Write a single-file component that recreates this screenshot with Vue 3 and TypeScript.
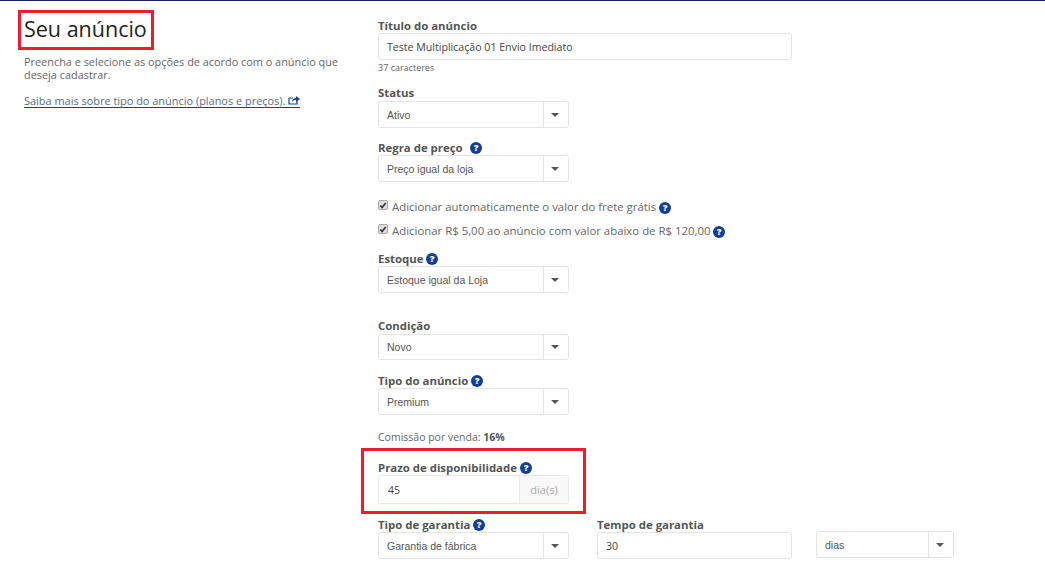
<script setup lang="ts">
const helpPath = 'M7 0a7 7 0 1 0 0 14A7 7 0 0 0 7 0z'
</script>

<template>
  <div class="page">
    <aside class="side">
      <h1 class="title">Seu anúncio</h1>
      <p class="intro">Preencha e selecione as opções de acordo com o anúncio que deseja cadastrar.</p>
      <a class="more">Saiba mais sobre tipo do anúncio (planos e preços).
        <svg class="ext" width="12" height="10" viewBox="0 0 12 10"><path d="M1 3h4M1 3v6h8V6" fill="none" stroke="#15418c" stroke-width="1.2"/><path d="M4 7c0-3 2-4 4-4V1l4 3-4 3V5C6 5 5 5.500 4 7z" fill="#15418c"/></svg>
      </a>
    </aside>
    <main class="form">
      <label class="lab l-titulo">Título do anúncio</label>
      <div class="input wide">Teste Multiplicação 01 Envio Imediato</div>
      <div class="hint">37 caracteres</div>

      <label class="lab l-status">Status</label>
      <div class="select s-status"><span>Ativo</span><i class="arrow"></i></div>

      <label class="lab l-regra">Regra de preço <svg class="q q-far" viewBox="0 0 14 14"><path :d="helpPath" fill="#123f94"/><text x="7" y="11" text-anchor="middle" class="qt">?</text></svg></label>
      <div class="select"><span>Preço igual da loja</span><i class="arrow"></i></div>

      <div class="check c1"><span class="box"><svg viewBox="0 0 9 9" width="9" height="9"><path d="M1.500 4.500l2 2.200 4-5" fill="none" stroke="#333" stroke-width="1.800"/></svg></span>Adicionar automaticamente o valor do frete grátis<svg class="q" viewBox="0 0 14 14"><path :d="helpPath" fill="#123f94"/><text x="7" y="11" text-anchor="middle" class="qt">?</text></svg></div>
      <div class="check c2"><span class="box"><svg viewBox="0 0 9 9" width="9" height="9"><path d="M1.500 4.500l2 2.200 4-5" fill="none" stroke="#333" stroke-width="1.800"/></svg></span>Adicionar R$ 5,00 ao anúncio com valor abaixo de R$ 120,00<svg class="q" viewBox="0 0 14 14"><path :d="helpPath" fill="#123f94"/><text x="7" y="11" text-anchor="middle" class="qt">?</text></svg></div>

      <label class="lab l-estoque">Estoque <svg class="q" viewBox="0 0 14 14"><path :d="helpPath" fill="#123f94"/><text x="7" y="11" text-anchor="middle" class="qt">?</text></svg></label>
      <div class="select"><span>Estoque igual da Loja</span><i class="arrow"></i></div>

      <label class="lab l-condicao">Condição</label>
      <div class="select s-cond"><span>Novo</span><i class="arrow"></i></div>

      <label class="lab l-tipo">Tipo do anúncio <svg class="q" viewBox="0 0 14 14"><path :d="helpPath" fill="#123f94"/><text x="7" y="11" text-anchor="middle" class="qt">?</text></svg></label>
      <div class="select"><span>Premium</span><i class="arrow"></i></div>

      <div class="commission">Comissão por venda: <b>16%</b></div>

      <section class="mark">
        <label class="lab">Prazo de disponibilidade <svg class="q" viewBox="0 0 14 14"><path :d="helpPath" fill="#123f94"/><text x="7" y="11" text-anchor="middle" class="qt">?</text></svg></label>
        <div class="group"><div class="gval">45</div><div class="addon">dia(s)</div></div>
      </section>

      <div class="row">
        <div class="col">
          <label class="lab">Tipo de garantia <svg class="q" viewBox="0 0 14 14"><path :d="helpPath" fill="#123f94"/><text x="7" y="11" text-anchor="middle" class="qt">?</text></svg></label>
          <div class="select"><span>Garantia de fábrica</span><i class="arrow"></i></div>
        </div>
        <div class="col col2">
          <label class="lab">Tempo de garantia</label>
          <div class="input time">30</div>
        </div>
        <div class="select small"><span>dias</span><i class="arrow"></i></div>
      </div>
    </main>
  </div>
</template>

<style>
html, body { margin: 0; background: #fff; overflow: hidden; }
</style>

<style scoped>
.page {
  width: 1045px; height: 573px; box-sizing: border-box; overflow: hidden;
  border-top: 1px solid #1f2460; display: flex;
  font-family: "Open Sans", sans-serif; color: #555; background: #fff;
}
.side { width: 378px; flex: none; padding-left: 24px; box-sizing: border-box; }
.title {
  display: table; margin: 9px 0 0 -6px; padding: 0 4px 3px 3px;
  height: 40px; line-height: 31px; box-sizing: border-box;
  border: 3px solid #ed1c2e; font-size: 21.500px; font-weight: 500; color: #222;
  white-space: nowrap;
}
.intro { margin: 5px 0 0; width: 325px; font-size: 10.900px; line-height: 13px; color: #666; }
.more {
  display: inline-block; margin-top: 13px; font-size: 10.950px; line-height: 13px;
  color: #5b6b80; border-bottom: 1px solid #15418c; padding-bottom: 0; white-space: nowrap;
}
.ext { vertical-align: 0; }
.form { flex: 1; }
.lab { display: block; font-size: 11.400px; font-weight: 700; color: #555; line-height: 14px; padding-bottom: 2px; white-space: nowrap; }
.l-titulo { margin-top: 18px; }
.l-status { margin-top: 12px; }
.l-regra { margin-top: 13px; }
.l-estoque { margin-top: 13px; }
.l-condicao { margin-top: 26px; }
.l-tipo { margin-top: 14px; }
.input, .select, .group {
  box-sizing: border-box; height: 27px; border: 1px solid #e3e3e3; border-radius: 3px;
  background: #fff; display: flex; align-items: center;
}
.input { padding-left: 8px; font-size: 10.600px; color: #444; }
.wide { width: 414px; margin-top: -2px; }
.hint { font-size: 9px; color: #666; line-height: 12px; margin-top: 2px; }
.select { width: 191px; margin-top: -2px; font-family: "Liberation Sans", sans-serif; font-size: 10.500px; color: #555; }
.s-status { margin-top: -1px; }
.s-cond { margin-top: -1px; height: 26px; }
.select span { flex: 1; padding-left: 8px; }
.arrow {
  flex: none; width: 24px; height: 100%; border-left: 1px solid #e3e3e3; position: relative;
}
.arrow::after {
  content: ""; position: absolute; left: 7px; top: 11px;
  border: 4px solid transparent; border-top: 4px solid #555; border-bottom: 0;
}
.s-cond .arrow::after { top: 10px; }
.q { width: 12px; height: 12px; vertical-align: -2px; margin-left: 0; }
.q-far { margin-left: 4px; }
.qt { font: 800 11px "Open Sans", sans-serif; fill: #fff; }
.check { font-size: 11.400px; line-height: 16px; color: #666; display: flex; align-items: center; white-space: nowrap; height: 16px; }
.c1 { margin-top: 17px; }
.c2 { margin-top: 8px; }
.check .q { margin-left: 3px; position: relative; top: 1px; }
.box {
  width: 10px; height: 10px; box-sizing: border-box; background: #ddd; border: 1px solid #aaa; border-radius: 2px;
  margin-right: 4px; display: flex; align-items: center; justify-content: center; position: relative; top: -2px;
}
.commission { font-size: 10.500px; line-height: 14px; margin-top: 15px; color: #666; }
.commission b { color: #555; }
.mark {
  box-sizing: border-box; width: 225px; height: 66px; margin: 4px 0 0 -17px;
  border: 3px solid #ed1c2e; padding: 10px 0 0 14px;
}
.group { width: 191px; height: 29px; margin-top: -2px; overflow: hidden; border-color: #e8e8e8; }
.gval { flex: 1; padding-left: 9px; font-size: 10.500px; color: #444; height: 100%; display: flex; align-items: center; }
.addon {
  width: 49px; flex: none; box-sizing: border-box; height: 100%; background: #f8f8f8; border-left: 1px solid #e8e8e8;
  display: flex; align-items: center; justify-content: center; font-size: 11px; color: #aaa;
}
.row { display: flex; align-items: flex-start; margin-top: 4px; }
.col2 { margin-left: 28px; }
.time { width: 195px; margin-top: -2px; }
.small { width: 138px; margin: 13px 0 0 24px; }
</style>
